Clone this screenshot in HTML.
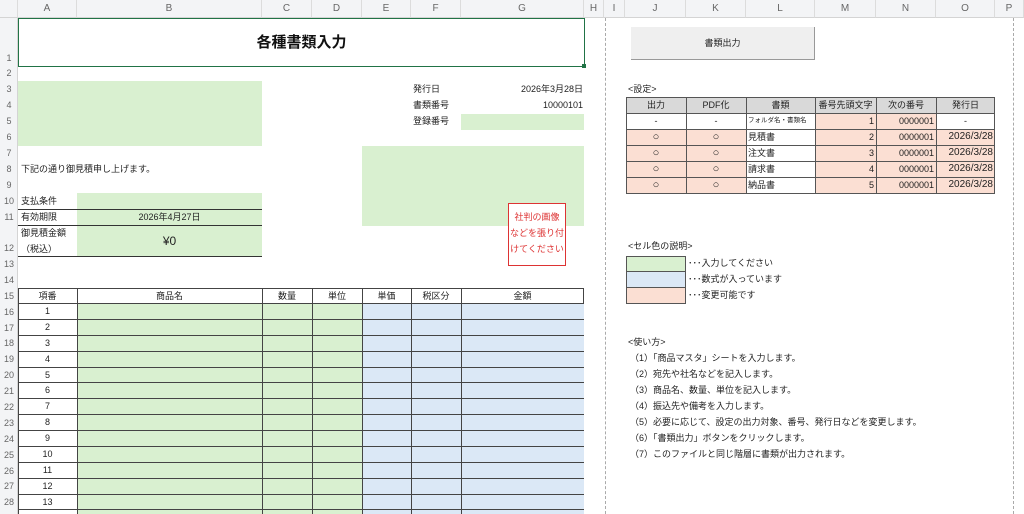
<!DOCTYPE html>
<html><head><meta charset="utf-8"><style>
*{margin:0;padding:0;box-sizing:border-box}
body{width:1024px;height:514px;overflow:hidden;background:#fff;position:relative;font-family:"Liberation Sans","Noto Sans CJK JP",sans-serif;font-size:9px;color:#222}
div{position:absolute}
.ch{top:0;height:18px;background:#f3f4f6;border-bottom:1px solid #d4d4d4;border-right:1px solid #dcdcdc;color:#666;font-size:10px;text-align:center;line-height:18px}
.rh{left:0;width:18px;background:#f3f4f6;border-right:1px solid #d4d4d4;color:#666;font-size:9px;text-align:center}
.g{background:#d9f0d0}.b{background:#dbe8f6}.p{background:#fbdfd3}
.t{white-space:nowrap;line-height:16px}
.c{text-align:center}.r{text-align:right}
.o{font-size:11px}
.d{font-size:10px;line-height:16px}
</style></head><body>
<div class="ch" style="left:0;width:18px"></div>
<div class="ch" style="left:18px;width:59px">A</div>
<div class="ch" style="left:77px;width:185px">B</div>
<div class="ch" style="left:262px;width:50px">C</div>
<div class="ch" style="left:312px;width:50px">D</div>
<div class="ch" style="left:362px;width:49px">E</div>
<div class="ch" style="left:411px;width:50px">F</div>
<div class="ch" style="left:461px;width:123px">G</div>
<div class="ch" style="left:584px;width:20px">H</div>
<div class="ch" style="left:604px;width:21px">I</div>
<div class="ch" style="left:625px;width:61px">J</div>
<div class="ch" style="left:686px;width:60px">K</div>
<div class="ch" style="left:746px;width:69px">L</div>
<div class="ch" style="left:815px;width:61px">M</div>
<div class="ch" style="left:876px;width:60px">N</div>
<div class="ch" style="left:936px;width:59px">O</div>
<div class="ch" style="left:995px;width:29px">P</div>
<div class="rh" style="top:18px;height:496px"></div>
<div class="rh" style="top:18px;height:48px;line-height:80px;background:none;border:none">1</div>
<div class="rh" style="top:66px;height:15px;line-height:15px;background:none;border:none">2</div>
<div class="rh" style="top:81px;line-height:16px;background:none;border:none">3</div>
<div class="rh" style="top:97px;line-height:16px;background:none;border:none">4</div>
<div class="rh" style="top:113px;line-height:16px;background:none;border:none">5</div>
<div class="rh" style="top:129px;line-height:16px;background:none;border:none">6</div>
<div class="rh" style="top:145px;line-height:16px;background:none;border:none">7</div>
<div class="rh" style="top:161px;line-height:16px;background:none;border:none">8</div>
<div class="rh" style="top:177px;line-height:16px;background:none;border:none">9</div>
<div class="rh" style="top:193px;line-height:16px;background:none;border:none">10</div>
<div class="rh" style="top:209px;line-height:16px;background:none;border:none">11</div>
<div class="rh" style="top:240px;line-height:16px;background:none;border:none">12</div>
<div class="rh" style="top:256px;line-height:16px;background:none;border:none">13</div>
<div class="rh" style="top:272px;line-height:16px;background:none;border:none">14</div>
<div class="rh" style="top:288px;line-height:16px;background:none;border:none">15</div>
<div class="rh" style="top:304px;line-height:16px;background:none;border:none">16</div>
<div class="rh" style="top:320px;line-height:16px;background:none;border:none">17</div>
<div class="rh" style="top:335px;line-height:16px;background:none;border:none">18</div>
<div class="rh" style="top:351px;line-height:16px;background:none;border:none">19</div>
<div class="rh" style="top:367px;line-height:16px;background:none;border:none">20</div>
<div class="rh" style="top:383px;line-height:16px;background:none;border:none">21</div>
<div class="rh" style="top:399px;line-height:16px;background:none;border:none">22</div>
<div class="rh" style="top:415px;line-height:16px;background:none;border:none">23</div>
<div class="rh" style="top:431px;line-height:16px;background:none;border:none">24</div>
<div class="rh" style="top:447px;line-height:16px;background:none;border:none">25</div>
<div class="rh" style="top:463px;line-height:16px;background:none;border:none">26</div>
<div class="rh" style="top:478px;line-height:16px;background:none;border:none">27</div>
<div class="rh" style="top:494px;line-height:16px;background:none;border:none">28</div>

<div style="left:605px;top:18px;height:496px;border-left:1px dashed #aaa"></div>
<div style="left:1013px;top:18px;height:496px;border-left:1px dashed #aaa"></div>

<div style="left:18px;top:18px;width:567px;height:49px;border:1px solid #217346;text-align:center;line-height:47px;font-size:15px;font-weight:bold;color:#111">各種書類入力</div>
<div style="left:582px;top:64px;width:4px;height:4px;background:#217346"></div>

<div class="g" style="left:18px;top:81px;width:244px;height:65px"></div>
<div class="t" style="left:413px;top:81px">発行日</div>
<div class="t r" style="left:461px;top:81px;width:122px">2026年3月28日</div>
<div class="t" style="left:413px;top:97px">書類番号</div>
<div class="t r" style="left:461px;top:97px;width:122px">10000101</div>
<div class="t" style="left:413px;top:113px">登録番号</div>
<div class="g" style="left:461px;top:114px;width:123px;height:16px"></div>

<div class="g" style="left:362px;top:146px;width:222px;height:80px"></div>
<div class="t" style="left:21px;top:161px">下記の通り御見積申し上げます。</div>

<div class="t" style="left:21px;top:193px">支払条件</div>
<div class="g" style="left:77px;top:193px;width:185px;height:16px"></div>
<div style="left:18px;top:209px;width:244px;border-top:1px solid #333"></div>
<div class="t" style="left:21px;top:209px">有効期限</div>
<div class="g t c" style="left:77px;top:210px;width:185px;height:15px;line-height:14px">2026年4月27日</div>
<div style="left:18px;top:225px;width:244px;border-top:1px solid #333"></div>
<div class="t" style="left:21px;top:225px">御見積金額</div>
<div class="t" style="left:21px;top:241px">（税込）</div>
<div class="g c" style="left:77px;top:226px;width:185px;height:30px;line-height:30px;font-size:12px">¥0</div>
<div style="left:18px;top:256px;width:244px;border-top:1px solid #333"></div>

<div style="left:508px;top:203px;width:58px;height:63px;border:1px solid #d33;color:#d33;text-align:center;line-height:16px;padding-top:5px;background:#fff">社判の画像<br>などを張り付<br>けてください</div>

<div style="left:18px;top:288px;width:566px;height:226px;border-left:1px solid #444;border-top:1px solid #444;border-right:1px solid #444"></div>
<div class="g" style="left:77px;top:304px;width:285px;height:210px"></div>
<div class="b" style="left:362px;top:304px;width:222px;height:210px"></div>
<div style="left:77px;top:288px;height:226px;border-left:1px solid #444"></div>
<div style="left:262px;top:288px;height:226px;border-left:1px solid #444"></div>
<div style="left:312px;top:288px;height:226px;border-left:1px solid #444"></div>
<div style="left:362px;top:288px;height:226px;border-left:1px solid #444"></div>
<div style="left:411px;top:288px;height:226px;border-left:1px solid #444"></div>
<div style="left:461px;top:288px;height:226px;border-left:1px solid #444"></div>
<div class="t c" style="left:18px;top:288px;width:59px">項番</div>
<div class="t c" style="left:77px;top:288px;width:185px">商品名</div>
<div class="t c" style="left:262px;top:288px;width:50px">数量</div>
<div class="t c" style="left:312px;top:288px;width:50px">単位</div>
<div class="t c" style="left:362px;top:288px;width:49px">単価</div>
<div class="t c" style="left:411px;top:288px;width:50px">税区分</div>
<div class="t c" style="left:461px;top:288px;width:123px">金額</div>
<div style="left:18px;top:303px;width:566px;border-top:1px solid #444"></div>
<div style="left:18px;top:319px;width:566px;border-top:1px solid #444"></div>
<div style="left:18px;top:335px;width:566px;border-top:1px solid #444"></div>
<div style="left:18px;top:351px;width:566px;border-top:1px solid #444"></div>
<div style="left:18px;top:367px;width:566px;border-top:1px solid #444"></div>
<div style="left:18px;top:382px;width:566px;border-top:1px solid #444"></div>
<div style="left:18px;top:398px;width:566px;border-top:1px solid #444"></div>
<div style="left:18px;top:414px;width:566px;border-top:1px solid #444"></div>
<div style="left:18px;top:430px;width:566px;border-top:1px solid #444"></div>
<div style="left:18px;top:446px;width:566px;border-top:1px solid #444"></div>
<div style="left:18px;top:462px;width:566px;border-top:1px solid #444"></div>
<div style="left:18px;top:478px;width:566px;border-top:1px solid #444"></div>
<div style="left:18px;top:494px;width:566px;border-top:1px solid #444"></div>
<div style="left:18px;top:509px;width:566px;border-top:1px solid #444"></div>
<div class="t c" style="left:18px;top:303px;width:59px">1</div>
<div class="t c" style="left:18px;top:319px;width:59px">2</div>
<div class="t c" style="left:18px;top:335px;width:59px">3</div>
<div class="t c" style="left:18px;top:351px;width:59px">4</div>
<div class="t c" style="left:18px;top:367px;width:59px">5</div>
<div class="t c" style="left:18px;top:382px;width:59px">6</div>
<div class="t c" style="left:18px;top:398px;width:59px">7</div>
<div class="t c" style="left:18px;top:414px;width:59px">8</div>
<div class="t c" style="left:18px;top:430px;width:59px">9</div>
<div class="t c" style="left:18px;top:446px;width:59px">10</div>
<div class="t c" style="left:18px;top:462px;width:59px">11</div>
<div class="t c" style="left:18px;top:478px;width:59px">12</div>
<div class="t c" style="left:18px;top:494px;width:59px">13</div>

<div style="left:631px;top:27px;width:184px;height:33px;background:#efefef;border-right:1px solid #999;border-bottom:1px solid #999;text-align:center;line-height:32px">書類出力</div>
<div class="t" style="left:628px;top:81px">&lt;設定&gt;</div>

<div style="left:626px;top:97px;width:369px;height:97px;border:1px solid #555"></div>
<div style="left:627px;top:98px;width:367px;height:16px;background:#d9d9d9"></div>
<div class="p" style="left:627px;top:130px;width:120px;height:63px"></div>
<div class="p" style="left:815px;top:114px;width:121px;height:79px"></div>
<div class="p" style="left:936px;top:130px;width:58px;height:63px"></div>
<div style="left:626px;top:113px;width:369px;border-top:1px solid #555"></div>
<div style="left:626px;top:129px;width:369px;border-top:1px solid #555"></div>
<div style="left:626px;top:145px;width:369px;border-top:1px solid #555"></div>
<div style="left:626px;top:161px;width:369px;border-top:1px solid #555"></div>
<div style="left:626px;top:177px;width:369px;border-top:1px solid #555"></div>
<div style="left:686px;top:97px;height:97px;border-left:1px solid #555"></div>
<div style="left:746px;top:97px;height:97px;border-left:1px solid #555"></div>
<div style="left:815px;top:97px;height:97px;border-left:1px solid #555"></div>
<div style="left:876px;top:97px;height:97px;border-left:1px solid #555"></div>
<div style="left:936px;top:97px;height:97px;border-left:1px solid #555"></div>
<div class="t c" style="left:626px;top:97px;width:60px">出力</div>
<div class="t c" style="left:686px;top:97px;width:60px">PDF化</div>
<div class="t c" style="left:746px;top:97px;width:69px">書類</div>
<div class="t c" style="left:815px;top:97px;width:61px">番号先頭文字</div>
<div class="t c" style="left:876px;top:97px;width:60px">次の番号</div>
<div class="t c" style="left:936px;top:97px;width:59px">発行日</div>

<div class="t c" style="left:626px;top:113px;width:60px">-</div>
<div class="t c" style="left:686px;top:113px;width:60px">-</div>
<div class="t" style="left:748px;top:113px;font-size:6.5px">フォルダ名・書類名</div>
<div class="t r" style="left:815px;top:113px;width:59px">1</div>
<div class="t r" style="left:876px;top:113px;width:58px">0000001</div>
<div class="t c" style="left:936px;top:113px;width:59px">-</div>

<div class="t c o" style="left:626px;top:129px;width:60px">○</div><div class="t c o" style="left:686px;top:129px;width:60px">○</div>
<div class="t" style="left:748px;top:129px">見積書</div><div class="t r" style="left:815px;top:129px;width:59px">2</div>
<div class="t r" style="left:876px;top:129px;width:58px">0000001</div><div class="t r d" style="left:936px;top:129px;width:57px">2026/3/28</div>
<div class="t c o" style="left:626px;top:145px;width:60px">○</div><div class="t c o" style="left:686px;top:145px;width:60px">○</div>
<div class="t" style="left:748px;top:145px">注文書</div><div class="t r" style="left:815px;top:145px;width:59px">3</div>
<div class="t r" style="left:876px;top:145px;width:58px">0000001</div><div class="t r d" style="left:936px;top:145px;width:57px">2026/3/28</div>
<div class="t c o" style="left:626px;top:161px;width:60px">○</div><div class="t c o" style="left:686px;top:161px;width:60px">○</div>
<div class="t" style="left:748px;top:161px">請求書</div><div class="t r" style="left:815px;top:161px;width:59px">4</div>
<div class="t r" style="left:876px;top:161px;width:58px">0000001</div><div class="t r d" style="left:936px;top:161px;width:57px">2026/3/28</div>
<div class="t c o" style="left:626px;top:177px;width:60px">○</div><div class="t c o" style="left:686px;top:177px;width:60px">○</div>
<div class="t" style="left:748px;top:177px">納品書</div><div class="t r" style="left:815px;top:177px;width:59px">5</div>
<div class="t r" style="left:876px;top:177px;width:58px">0000001</div><div class="t r d" style="left:936px;top:177px;width:57px">2026/3/28</div>

<div class="t" style="left:628px;top:238px">&lt;セル色の説明&gt;</div>
<div class="g" style="left:626px;top:256px;width:60px;height:16px;border:1px solid #555"></div>
<div class="b" style="left:626px;top:271px;width:60px;height:17px;border:1px solid #555"></div>
<div class="p" style="left:626px;top:287px;width:60px;height:17px;border:1px solid #555"></div>
<div class="t" style="left:688px;top:255px">･･･入力してください</div>
<div class="t" style="left:688px;top:271px">･･･数式が入っています</div>
<div class="t" style="left:688px;top:287px">･･･変更可能です</div>

<div class="t" style="left:628px;top:334px">&lt;使い方&gt;</div>
<div class="t" style="left:630px;top:350px">（1）「商品マスタ」シートを入力します。</div>
<div class="t" style="left:630px;top:366px">（2）宛先や社名などを記入します。</div>
<div class="t" style="left:630px;top:382px">（3）商品名、数量、単位を記入します。</div>
<div class="t" style="left:630px;top:398px">（4）振込先や備考を入力します。</div>
<div class="t" style="left:630px;top:414px">（5）必要に応じて、設定の出力対象、番号、発行日などを変更します。</div>
<div class="t" style="left:630px;top:430px">（6）「書類出力」ボタンをクリックします。</div>
<div class="t" style="left:630px;top:446px">（7）このファイルと同じ階層に書類が出力されます。</div>
</body></html>
